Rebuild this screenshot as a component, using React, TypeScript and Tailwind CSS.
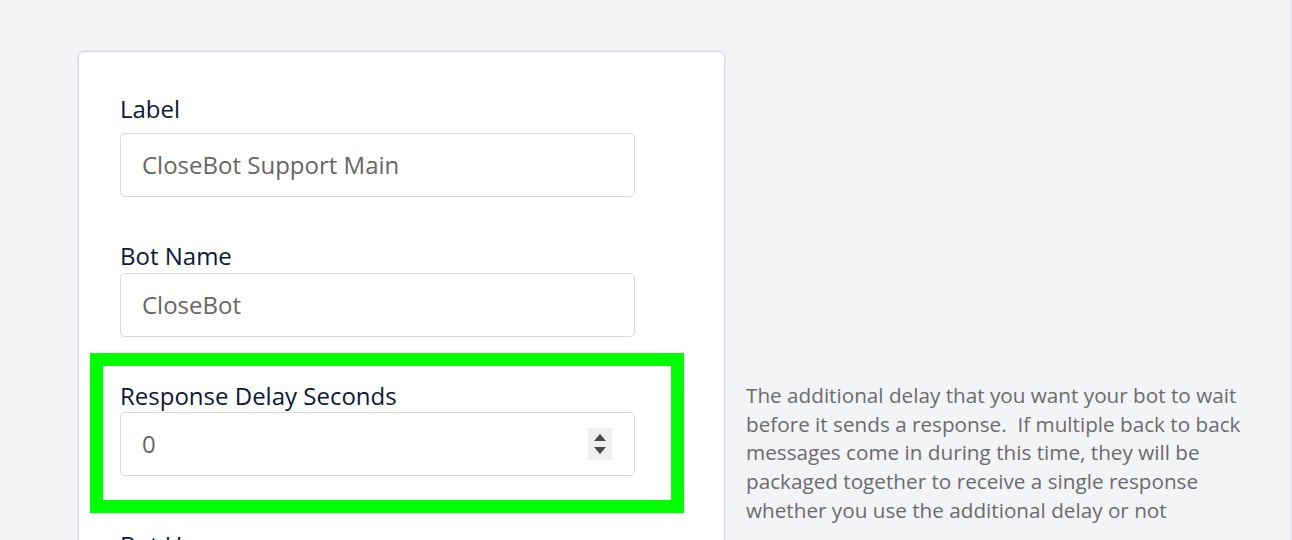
import React from "react";

function Spinner() {
  return (
    <div className="w-[24px] h-[32px] bg-[#efefef] flex flex-col items-center justify-center gap-[6px]">
      <svg width="12" height="7" viewBox="0 0 12 7"><path d="M6 0 L12 7 L0 7 Z" fill="#4a4a4a" /></svg>
      <svg width="12" height="7" viewBox="0 0 12 7"><path d="M0 0 L12 0 L6 7 Z" fill="#4a4a4a" /></svg>
    </div>
  );
}

export default function App() {
  const labelCls = "text-[24px] leading-[32px] text-[#0c1838]";
  const inputCls =
    "w-[515px] h-[64px] border border-[#d9d9d9] rounded-[5px] bg-white flex items-center pl-[21px] pr-[22px] text-[24px] text-[#666666]";
  return (
    <div className="h-[540px] overflow-hidden bg-[#f3f4f6] font-['Open_Sans',sans-serif] pl-[78px] pt-[51px] flex border-r-2 border-[#e8e9ec]">
      <div className="w-[647px] shrink-0 self-start bg-white border border-[#d0d8ea] rounded-[6px] px-[41px] pt-[41px] pb-[40px] shadow-[0_0_2px_rgba(180,190,215,0.6)]">
        <div>
          <div className={labelCls + " mb-[8px]"}>Label</div>
          <div className={inputCls}>CloseBot Support Main</div>
        </div>
        <div className="mt-[43px]">
          <div className={labelCls + " mb-[1px]"}>Bot Name</div>
          <div className={inputCls}>CloseBot</div>
        </div>
        <div className="mt-[43px] relative">
          <div className="absolute left-[-30px] top-[-27px] w-[594px] h-[160px] border-[13px] border-[#00ff00] pointer-events-none" />
          <div className={labelCls}>Response Delay Seconds</div>
          <div className={inputCls + " justify-between"}>
            <span>0</span>
            <Spinner />
          </div>
        </div>
        <div className="mt-[53px]">
          <div className={labelCls}>Bot Username</div>
          <div className={inputCls + " mt-[8px]"}>CloseBot</div>
        </div>
      </div>
      <div className="ml-[21px] pt-[330px] w-[505px]">
        <p className="text-[20.7px] leading-[28.7px] text-[#6b6b6b]">
          The additional delay that you want your bot to wait before it sends a response.{"\u00a0"} If multiple back to back messages come in during this time, they will be packaged together to receive a single response whether you use the additional delay or not
        </p>
      </div>
    </div>
  );
}
